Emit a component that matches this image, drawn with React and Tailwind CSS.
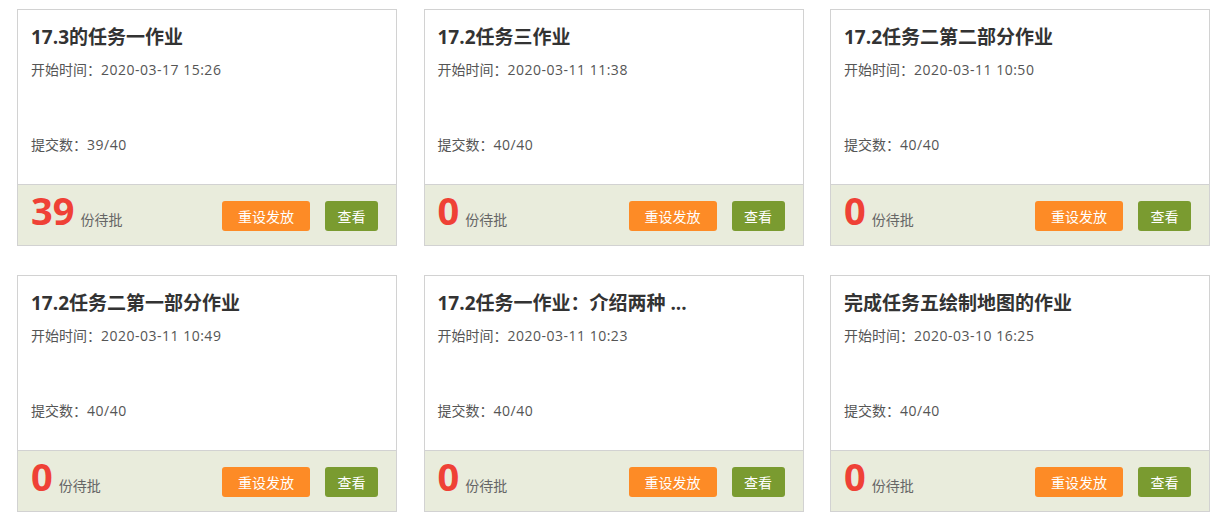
const TASKS = [
  { title: '17.3的任务一作业', start: '2020-03-17 15:26', submitted: '39/40', pending: 39 },
  { title: '17.2任务三作业', start: '2020-03-11 11:38', submitted: '40/40', pending: 0 },
  { title: '17.2任务二第二部分作业', start: '2020-03-11 10:50', submitted: '40/40', pending: 0 },
  { title: '17.2任务二第一部分作业', start: '2020-03-11 10:49', submitted: '40/40', pending: 0 },
  { title: '17.2任务一作业：介绍两种 ...', start: '2020-03-11 10:23', submitted: '40/40', pending: 0 },
  { title: '完成任务五绘制地图的作业', start: '2020-03-10 16:25', submitted: '40/40', pending: 0 },
];

function TaskCard({ task }) {
  return (
    <div className="w-[380px] border border-[#d2d2d2] bg-white">
      <div className="h-[174px] px-[13px] pt-[15px]">
        <h3 className="text-[19px] leading-[24px] font-bold text-[#333]">{task.title}</h3>
        <p className="mt-[11px] text-[14px] leading-[20px] text-[#555]">
          开始时间：<span className="tracking-[0.5px]">{task.start}</span>
        </p>
        <p className="mt-[55px] text-[14px] leading-[20px] text-[#555]">
          提交数：<span className="tracking-[0.5px]">{task.submitted}</span>
        </p>
      </div>
      <div className="h-[61px] border-t border-[#d2d2d2] bg-[#e9ecdc] pl-[13px] pr-[18px] flex items-center">
        <div className="flex items-baseline gap-[6px] mb-[10px]">
          <span className="text-[38px] leading-[38px] font-bold text-[#ef4136]">{task.pending}</span>
          <span className="text-[14px] leading-[20px] text-[#666]">份待批</span>
        </div>
        <button className="ml-auto mt-[2px] w-[88px] h-[30px] rounded-[3px] bg-[#fd8b26] text-white text-[14px]">重设发放</button>
        <button className="ml-[15px] mt-[2px] w-[53px] h-[30px] rounded-[3px] bg-[#7a9b30] text-white text-[14px]">查看</button>
      </div>
    </div>
  );
}

export default function App() {
  return (
    <div
      className="bg-white min-h-[523px] pl-[17px] pt-[9px] grid grid-cols-[380px_380px_380px] gap-x-[26.5px] gap-y-[29px] content-start"
      style={{ fontFamily: '"Open Sans", "Noto Sans CJK SC", sans-serif' }}
    >
      {TASKS.map((t) => (
        <TaskCard key={t.title} task={t} />
      ))}
    </div>
  );
}
